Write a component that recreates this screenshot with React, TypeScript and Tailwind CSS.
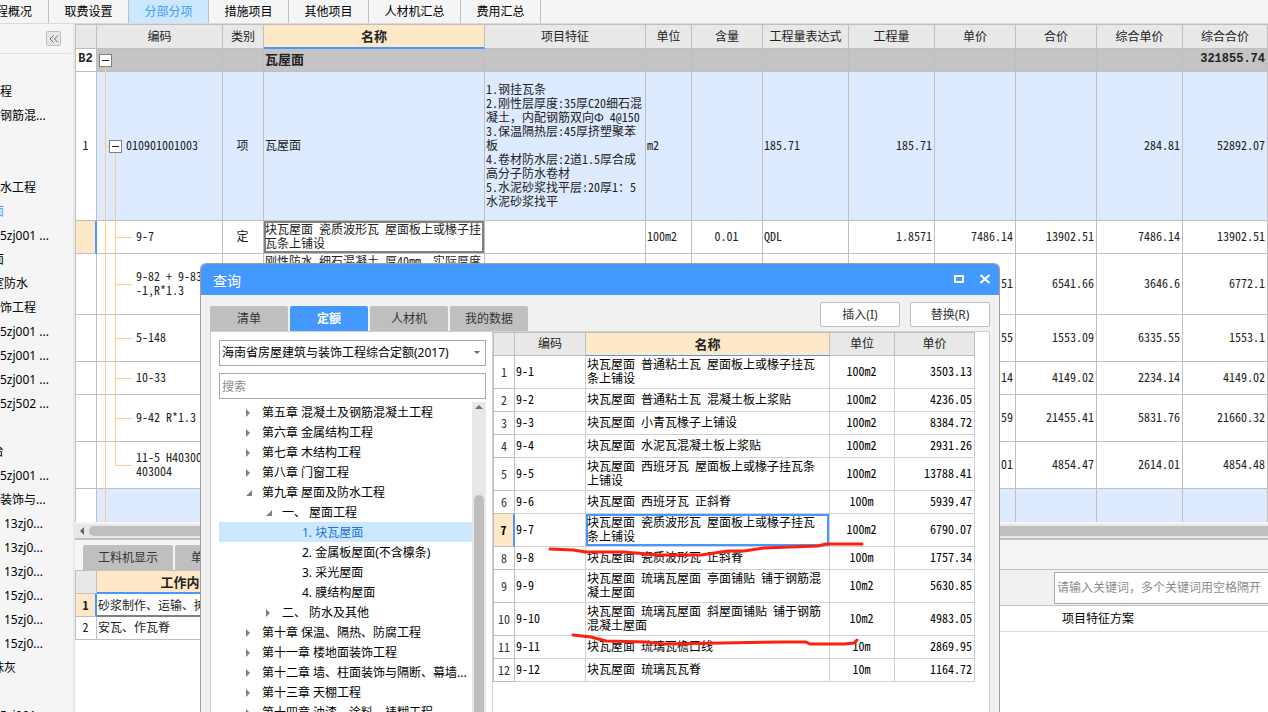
import type { ReactNode } from "react";

const topTabs = [
  { label: "工程概况", width: "w-[81px] -ml-8" },
  { label: "取费设置", width: "w-20" },
  { label: "分部分项", width: "w-20", active: true },
  { label: "措施项目", width: "w-20" },
  { label: "其他项目", width: "w-20" },
  { label: "人材机汇总", width: "w-[92px]" },
  { label: "费用汇总", width: "w-20" },
];

const sideItems = [
  { text: "程" },
  { text: "钢筋混..." },
  { text: "" },
  { text: "" },
  { text: "水工程" },
  { text: "面", shift: "-ml-2", active: true },
  { text: "5zj001 ..." },
  { text: "面", shift: "-ml-2" },
  { text: "室防水", shift: "-ml-2" },
  { text: "饰工程" },
  { text: "5zj001 ..." },
  { text: "5zj001 ..." },
  { text: "5zj001 ..." },
  { text: "5zj502 ..." },
  { text: "" },
  { text: "台", shift: "-ml-2" },
  { text: "5zj001 ..." },
  { text: "装饰与..." },
  { text: "13zj0...", shift: "ml-1" },
  { text: "13zj0...", shift: "ml-1" },
  { text: "13zj0...", shift: "ml-1" },
  { text: "15zj0...", shift: "ml-1" },
  { text: "15zj0...", shift: "ml-1" },
  { text: "15zj0...", shift: "ml-1" },
  { text: "抹灰", shift: "-ml-2" },
  { text: "" },
  { text: "5zj001 ..." },
];

// Full-width punctuation inside the half-width grid font
const Wide = ({ children }: { children: ReactNode }) => (
  <span className="[font-feature-settings:'fwid']">{children}</span>
);

const features = (
  <>
    {"1.钢挂瓦条\n2.刚性层厚度:35厚C20细石混\n凝土"}
    <Wide>，</Wide>
    {
      "内配钢筋双向Ф 4@150\n3.保温隔热层:45厚挤塑聚苯\n板\n4.卷材防水层:2道1.5厚合成\n高分子防水卷材\n5.水泥砂浆找平层:20厚1：5\n水泥砂浆找平"
    }
  </>
);

const subRows = [
  {
    height: "h-[61px]",
    code: "9-82 + 9-83\n-1,R*1.3",
    name: (
      <>
        刚性防水 细石混凝土 厚40mm<Wide>，</Wide>实际厚度
      </>
    ),
    nums: ["3522.51", "6541.66", "3646.6", "6772.1"],
  },
  { height: "h-[47px]", code: "5-148", name: "", nums: ["6335.55", "1553.09", "6335.55", "1553.1"] },
  { height: "h-[33px]", code: "10-33", name: "", nums: ["2234.14", "4149.02", "2234.14", "4149.02"] },
  { height: "h-[47px]", code: "9-42 R*1.3", name: "", nums: ["5776.59", "21455.41", "5831.76", "21660.32"] },
  {
    height: "h-[47px]",
    code: "11-5 H403003\n403004",
    name: "",
    nums: ["2614.01", "4854.47", "2614.01", "4854.48"],
    last: true,
  },
];

const tree = [
  { level: 0, text: "第五章 混凝土及钢筋混凝土工程", icon: "closed" },
  { level: 0, text: "第六章 金属结构工程", icon: "closed" },
  { level: 0, text: "第七章 木结构工程", icon: "closed" },
  { level: 0, text: "第八章 门窗工程", icon: "closed" },
  { level: 0, text: "第九章 屋面及防水工程", icon: "open" },
  { level: 1, text: "一、 屋面工程", icon: "open" },
  { level: 2, text: "1. 块瓦屋面", icon: "", active: true },
  { level: 2, text: "2. 金属板屋面(不含檩条)", icon: "" },
  { level: 2, text: "3. 采光屋面", icon: "" },
  { level: 2, text: "4. 膜结构屋面", icon: "" },
  { level: 1, text: "二、 防水及其他", icon: "closed" },
  { level: 0, text: "第十章 保温、隔热、防腐工程", icon: "closed" },
  { level: 0, text: "第十一章 楼地面装饰工程", icon: "closed" },
  { level: 0, text: "第十二章 墙、柱面装饰与隔断、幕墙...", icon: "closed" },
  { level: 0, text: "第十三章 天棚工程", icon: "closed" },
  { level: 0, text: "第十四章 油漆、涂料、裱糊工程", icon: "closed" },
];
const indents = ["pl-[26px]", "pl-[46px]", "pl-[66px]"];

const quotas = [
  { name: "块瓦屋面 普通粘土瓦 屋面板上或椽子挂瓦\n条上铺设", unit: "100m2", price: "3503.13" },
  { name: "块瓦屋面 普通粘土瓦 混凝土板上浆贴", unit: "100m2", price: "4236.05" },
  { name: "块瓦屋面 小青瓦椽子上铺设", unit: "100m2", price: "8384.72" },
  { name: "块瓦屋面 水泥瓦混凝土板上浆贴", unit: "100m2", price: "2931.26" },
  { name: "块瓦屋面 西班牙瓦 屋面板上或椽子挂瓦条\n上铺设", unit: "100m2", price: "13788.41" },
  { name: "块瓦屋面 西班牙瓦 正斜脊", unit: "100m", price: "5939.47" },
  { name: "块瓦屋面 瓷质波形瓦 屋面板上或椽子挂瓦\n条上铺设", unit: "100m2", price: "6790.07" },
  { name: "块瓦屋面 瓷质波形瓦 正斜脊", unit: "100m", price: "1757.34" },
  { name: "块瓦屋面 琉璃瓦屋面 亭面铺贴 铺于钢筋混\n凝土屋面", unit: "10m2", price: "5630.85" },
  { name: "块瓦屋面 琉璃瓦屋面 斜屋面铺贴 铺于钢筋\n混凝土屋面", unit: "10m2", price: "4983.05" },
  { name: "块瓦屋面 琉璃瓦檐口线", unit: "10m", price: "2869.95" },
  { name: "块瓦屋面 琉璃瓦瓦脊", unit: "10m", price: "1164.72" },
];

// Half-width latin and digits, so the grids line up on a 6px pitch
const gridFont =
  "font-['Noto_Sans_CJK_SC',sans-serif] [font-feature-settings:'hwid'] text-xs leading-[14px] text-[#222]";

const Th = ({ children, className = "" }: { children?: ReactNode; className?: string }) => (
  <th
    className={`border-r border-b border-t border-[#bfbfbf] bg-[#e8e8e8] px-0 pt-0 pb-0.5 font-normal whitespace-nowrap ${className}`}
  >
    {children}
  </th>
);

const Td = ({ children, className = "" }: { children?: ReactNode; className?: string }) => (
  <td className={`border-r border-b border-[#bfbfbf] pt-0 pr-0.5 pb-0.5 pl-px whitespace-pre ${className}`}>{children}</td>
);

const Collapse = () => (
  <span className="flex w-[13px] flex-col items-center">
    <span className="flex-1" />
    <button aria-label="折叠" className="flex size-[13px] items-center justify-center border border-[#808080] bg-white">
      <span className="h-px w-[7px] bg-[#222]" />
    </button>
    <span className="w-px flex-1 bg-[#ffcc80]" />
  </span>
);

const Branch = ({ height, last, children }: { height: string; last?: boolean; children: ReactNode }) => (
  <div className={`-mb-px flex items-stretch ${height}`}>
    <span className="ml-2 w-px bg-[#ffcc80]" />
    <span className={`ml-[9px] w-px bg-[#ffcc80] ${last ? "h-1/2" : ""}`} />
    <span className="h-px w-4 self-center bg-[#ffcc80]" />
    <span className="ml-1 self-center pb-1">{children}</span>
  </div>
);

const MainGrid = () => (
  <table className={`w-full table-fixed border-separate border-spacing-0 border-l border-[#bfbfbf] bg-white ${gridFont}`}>
    <colgroup>
      <col className="w-[21px]" />
      <col className="w-[126px]" />
      <col className="w-[41px]" />
      <col className="w-[221px]" />
      <col className="w-[161px]" />
      <col className="w-[46px]" />
      <col className="w-[71px]" />
      <col className="w-[86px]" />
      <col className="w-[86px]" />
      <col className="w-[81px]" />
      <col className="w-[81px]" />
      <col className="w-[86px]" />
      <col />
    </colgroup>
    <thead>
      <tr className="h-[25px]">
        <Th />
        <Th>编码</Th>
        <Th>类别</Th>
        <th className="border-t border-r border-b-2 border-[#bfbfbf] border-b-[#4499ff] bg-[#ffe8c8] p-0 text-[13px] font-bold">
          名称
        </th>
        <Th>项目特征</Th>
        <Th>单位</Th>
        <Th>含量</Th>
        <Th>工程量表达式</Th>
        <Th>工程量</Th>
        <Th>单价</Th>
        <Th>合价</Th>
        <Th>综合单价</Th>
        <Th>综合合价</Th>
      </tr>
    </thead>
    <tbody>
      <tr className="h-[23px] bg-[#c4c4c4] font-bold">
        <Td className="bg-white text-center font-['Liberation_Mono',monospace]">B2</Td>
        <td className="border-r border-b border-[#bfbfbf] p-0">
          <div className="-mb-px ml-0.5 flex h-[23px]">
            <Collapse />
          </div>
        </td>
        <Td />
        <Td className="text-[13px]">瓦屋面</Td>
        <Td />
        <Td />
        <Td />
        <Td />
        <Td />
        <Td />
        <Td />
        <Td />
        <Td className="text-right font-['Liberation_Mono',monospace]">321855.74</Td>
      </tr>
      <tr className="h-[149px] bg-[#deeaff]">
        <Td className="bg-white text-center">1</Td>
        <td className="border-r border-b border-[#bfbfbf] p-0">
          <div className="-mb-px flex h-[149px] items-stretch">
            <span className="ml-2 w-px bg-[#ffcc80]" />
            <span className="h-px w-[3px] self-center bg-[#ffcc80]" />
            <Collapse />
            <span className="ml-1 self-center pb-1">010901001003</span>
          </div>
        </td>
        <Td className="text-center">项</Td>
        <Td>瓦屋面</Td>
        <Td>{features}</Td>
        <Td>m2</Td>
        <Td />
        <Td>185.71</Td>
        <Td className="text-right">185.71</Td>
        <Td />
        <Td />
        <Td className="text-right">284.81</Td>
        <Td className="text-right">52892.07</Td>
      </tr>
      <tr className="h-[33px]">
        <td className="border-r-2 border-b border-[#bfbfbf] border-r-[#4499ff] bg-[#ffe8c8] p-0" />
        <td className="border-r border-b border-[#bfbfbf] p-0">
          <Branch height="h-[33px]">9-7</Branch>
        </td>
        <Td className="text-center">定</Td>
        <Td className="shadow-[inset_0_0_0_2px_#808080]">{"块瓦屋面 瓷质波形瓦 屋面板上或椽子挂\n瓦条上铺设"}</Td>
        <Td />
        <Td>100m2</Td>
        <Td className="text-center">0.01</Td>
        <Td>QDL</Td>
        <Td className="text-right">1.8571</Td>
        <Td className="text-right">7486.14</Td>
        <Td className="text-right">13902.51</Td>
        <Td className="text-right">7486.14</Td>
        <Td className="text-right">13902.51</Td>
      </tr>
      {subRows.map((row) => (
        <tr key={row.code} className={row.height}>
          <Td />
          <td className="border-r border-b border-[#bfbfbf] p-0 whitespace-pre">
            <Branch height={row.height} last={row.last}>
              {row.code}
            </Branch>
          </td>
          <Td />
          <Td className="align-top">{row.name}</Td>
          <Td />
          <Td />
          <Td />
          <Td />
          <Td />
          {row.nums.map((n, i) => (
            <Td key={i} className="text-right">
              {n}
            </Td>
          ))}
        </tr>
      ))}
      <tr className="h-[33px] bg-[#deeaff]">
        <td className="border-r border-[#bfbfbf] bg-white p-0" />
        <td className="border-r border-[#bfbfbf] p-0">
          <div className="ml-2 h-[33px] w-px bg-[#ffcc80]" />
        </td>
        {Array.from({ length: 11 }, (_, i) => (
          <td key={i} className="border-r border-[#bfbfbf] p-0" />
        ))}
      </tr>
    </tbody>
  </table>
);

const BottomPanel = () => (
  <section className="flex min-h-0 flex-1 border-t-2 border-[#bfbfbf] bg-white">
    <div className="min-w-0 flex-1">
      <div className="flex h-[30px] items-end gap-0.5 bg-[#f5f5f5] pl-2 text-[#333]">
        <button className="h-[25px] w-[90px] rounded-t-xs bg-[#bfbfbf]">工料机显示</button>
        <button className="h-[25px] w-20 rounded-t-xs bg-[#bfbfbf]">单价构成</button>
      </div>
      <table className={`table-fixed border-separate border-spacing-0 border-l border-[#bfbfbf] ${gridFont}`}>
        <colgroup>
          <col className="w-[21px]" />
          <col className="w-[180px]" />
        </colgroup>
        <thead>
          <tr className="h-6">
            <Th />
            <th className="border-t border-r border-b-2 border-[#bfbfbf] border-b-[#4499ff] bg-[#ffe8c8] p-0 text-[13px] font-bold">
              工作内容
            </th>
          </tr>
        </thead>
        <tbody>
          <tr className="h-[23px]">
            <td className="border-r-2 border-b border-[#bfbfbf] border-r-[#4499ff] bg-[#ffe8c8] p-0 text-center font-bold">1</td>
            <td className="border-r border-b-2 border-[#808080] px-px py-0 whitespace-nowrap">砂浆制作、运输、摊铺</td>
          </tr>
          <tr className="h-[23px]">
            <Td className="text-center">2</Td>
            <Td>安瓦、作瓦脊</Td>
          </tr>
        </tbody>
      </table>
    </div>
    <div className="w-[300px]">
      <div className="h-[30px] border-b border-[#bfbfbf] bg-[#f5f5f5]" />
      <div className="flex h-9 items-center justify-end border-b border-[#bfbfbf] bg-[#f1f1f1]">
        <input
          aria-label="关键词"
          placeholder="请输入关键词，多个关键词用空格隔开"
          className="h-8 w-[214px] border border-r-0 border-[#a8a8a8] bg-white px-0.5 placeholder:text-[#8c8c8c]"
        />
      </div>
      <div className="h-[26px] border-b border-[#d9d9d9] pl-[94px] leading-[26px]">项目特征方案</div>
    </div>
  </section>
);

const TreeArrow = ({ icon }: { icon: string }) => (
  <svg viewBox="0 0 8 8" className="mr-[9px] size-2 shrink-0 fill-[#808080]">
    {icon === "closed" && <path d="M1 0v8l4-4z" />}
    {icon === "open" && <path d="M7 1v6H1z" />}
  </svg>
);

const QueryDialog = () => (
  <div
    role="dialog"
    aria-label="查询"
    className="absolute top-[263px] bottom-0 left-[200px] flex w-[800px] flex-col rounded-t-md border border-b-0 border-[#a0a0a0] bg-[#f1f1f1]"
  >
    <header className="flex h-[31px] shrink-0 items-center rounded-t-[5px] bg-[#4499ff] pr-2 pl-3 text-white">
      <h2 className="flex-1 pt-0.5 text-sm">查询</h2>
      <button aria-label="最大化" className="mr-3.5">
        <svg viewBox="0 0 12 12" className="size-3 fill-none stroke-white stroke-2">
          <path d="M2 2h8v6H2z" />
        </svg>
      </button>
      <button aria-label="关闭">
        <svg viewBox="0 0 12 12" className="size-3 fill-none stroke-white stroke-2">
          <path d="M1.500 1l9 8M10.500 1l-9 8" />
        </svg>
      </button>
    </header>
    <div className="flex min-h-0 flex-1 flex-col px-[9px] pt-[7px]">
      <div className="flex h-[29px] shrink-0 text-[#333]">
        <div className="flex flex-1 items-end gap-0.5">
          <button className="h-[25px] w-[78px] rounded-t-xs bg-[#bfbfbf]">清单</button>
          <button className="h-[25px] w-[78px] rounded-t-xs bg-[#4499ff] font-bold text-white">定额</button>
          <button className="h-[25px] w-[78px] rounded-t-xs bg-[#bfbfbf]">人材机</button>
          <button className="h-[25px] w-[78px] rounded-t-xs bg-[#bfbfbf]">我的数据</button>
        </div>
        <div className="flex items-start gap-2.5">
          <button className="h-[25px] w-20 rounded-xs border border-[#bfbfbf] bg-white">插入(I)</button>
          <button className="h-[25px] w-20 rounded-xs border border-[#bfbfbf] bg-white">替换(R)</button>
        </div>
      </div>
      <div className="flex min-h-0 flex-1 border border-b-0 border-[#d0d0d0] bg-white">
        <div className="flex w-[282px] shrink-0 flex-col border-r border-[#d0d0d0] pt-2 pr-1.5 pl-2">
          <div className="relative mb-[7px] h-[26px] shrink-0">
            <select aria-label="定额库" className="h-[26px] w-full appearance-none border border-[#a8a8a8] px-0.5">
              <option>海南省房屋建筑与装饰工程综合定额(2017)</option>
            </select>
            <svg viewBox="0 0 6 4" className="pointer-events-none absolute top-[11px] right-1.5 h-1 w-1.5 fill-[#666]">
              <path d="M0 0h6L3 3z" />
            </svg>
          </div>
          <input
            aria-label="搜索"
            placeholder="搜索"
            className="mb-[3px] h-[26px] shrink-0 border border-[#a8a8a8] px-0.5 placeholder:text-[#8c8c8c]"
          />
          <div className="flex min-h-0 flex-1">
            <ul className="min-w-0 flex-1 overflow-hidden">
              {tree.map((node) => (
                <li
                  key={node.text}
                  className={`flex h-5 items-center pt-0.5 whitespace-nowrap ${indents[node.level]} ${
                    node.active ? "bg-[#cce8ff] text-[#1f6fe0]" : ""
                  }`}
                >
                  <TreeArrow icon={node.icon} />
                  {node.text}
                </li>
              ))}
            </ul>
            <div className="flex w-3.5 flex-col items-center bg-[#e8e8e8] pt-[3px]">
              <svg viewBox="0 0 8 4" className="h-1 w-2 fill-[#707070]">
                <path d="M4 0l4 4H0z" />
              </svg>
              <div className="mt-[86px] w-2.5 flex-1 rounded-t-full bg-[#bfbfbf]" />
            </div>
          </div>
        </div>
        <div className="relative">
          <table className={`w-[482px] table-fixed border-separate border-spacing-0 border-l border-[#bfbfbf] ${gridFont}`}>
            <colgroup>
              <col className="w-[21px]" />
              <col className="w-[71px]" />
              <col className="w-[244px]" />
              <col className="w-[65px]" />
              <col className="w-20" />
            </colgroup>
            <thead>
              <tr className="h-6">
                <Th />
                <Th>编码</Th>
                <th className="border-t border-r border-b border-[#bfbfbf] border-b-[#4499ff] bg-[#ffe8c8] p-0 text-[13px] font-bold">
                  名称
                </th>
                <Th>单位</Th>
                <Th>单价</Th>
              </tr>
            </thead>
            <tbody>
              {quotas.map((q, i) => {
                const selected = i === 6;
                return (
                  <tr key={i} className={`text-black ${q.name.includes("\n") ? "h-[33px]" : "h-[23px]"}`}>
                    <td
                      className={`border-b border-[#bfbfbf] p-0 text-center ${
                        selected ? "border-r-2 border-r-[#4499ff] bg-[#ffe8c8] font-bold" : "border-r text-[#333]"
                      }`}
                    >
                      {i + 1}
                    </td>
                    <Td className="border-[#d0d0d0]">9-{i + 1}</Td>
                    <Td className={`border-[#d0d0d0] ${selected ? "shadow-[inset_0_0_0_2px_#4499ff]" : ""}`}>{q.name}</Td>
                    <Td className="border-[#d0d0d0] text-center">{q.unit}</Td>
                    <Td className="border-[#d0d0d0] text-right">{q.price}</Td>
                  </tr>
                );
              })}
            </tbody>
          </table>
          {/* red pen marks */}
          <svg
            viewBox="0 0 330 120"
            className="pointer-events-none absolute top-[208px] left-[50px] h-[120px] w-[330px] fill-none stroke-[#ff1f10] stroke-3"
            strokeLinecap="round"
            strokeLinejoin="round"
          >
            <path d="M7 9L30 10L43 12L81 12L115 15L158 15L185 11L201 11L221 8L275 6L283 4L319 4" />
            <path d="M30 95L48 97L63 101L103 102L121 104L238 102L263 102L267 104L301 104L311 103L314 100" />
          </svg>
        </div>
      </div>
    </div>
  </div>
);

const App = () => {
  return (
    <div className="relative flex h-screen flex-col overflow-hidden bg-[#f5f5f5] font-['Noto_Sans','Noto_Sans_CJK_SC',sans-serif] text-xs text-black">
      <nav className="flex h-6 shrink-0 border-b border-[#d9d9d9]">
        {topTabs.map((tab) => (
          <button
            key={tab.label}
            className={`shrink-0 border-r border-[#bfbfbf] ${tab.width} ${tab.active ? "bg-[#cce8ff] text-[#4499ff]" : ""}`}
          >
            {tab.label}
          </button>
        ))}
      </nav>
      <div className="flex min-h-0 flex-1">
        <aside className="w-[75px] shrink-0 overflow-hidden border-r-2 border-[#e8e8e8]">
          <div className="mr-0.5 flex h-[30px] items-center justify-end border-b border-[#e0e0e0] pr-2.5">
            <button aria-label="收起" className="flex size-[15px] items-center justify-center rounded-xs border border-[#bfbfbf] bg-[#e8e8e8]">
              <svg viewBox="0 0 10 8" className="h-2 w-2.5 fill-none stroke-[#666]">
                <path d="M4.500 0.500L1 4l3.500 3.500M9 0.500L5.500 4 9 7.500" />
              </svg>
            </button>
          </div>
          <ul className="pt-[26px]">
            {sideItems.map((item, i) => (
              <li
                key={i}
                className={`h-6 leading-6 whitespace-nowrap ${item.shift ?? ""} ${item.active ? "text-[#4499ff]" : ""}`}
              >
                {item.text}
              </li>
            ))}
          </ul>
        </aside>
        <main className="flex min-w-0 flex-1 flex-col">
          <MainGrid />
          <div className="mt-0.5 flex h-3.5 shrink-0 items-center gap-1 bg-[#e8e8e8] pl-1">
            <svg viewBox="0 0 6 8" className="h-2 w-1.5 fill-[#666]">
              <path d="M5 0v8L1 4z" />
            </svg>
            <div className="h-2.5 flex-1 rounded-l-full bg-[#bfbfbf]" />
          </div>
          <BottomPanel />
        </main>
      </div>
      <QueryDialog />
    </div>
  );
};

export default App;
